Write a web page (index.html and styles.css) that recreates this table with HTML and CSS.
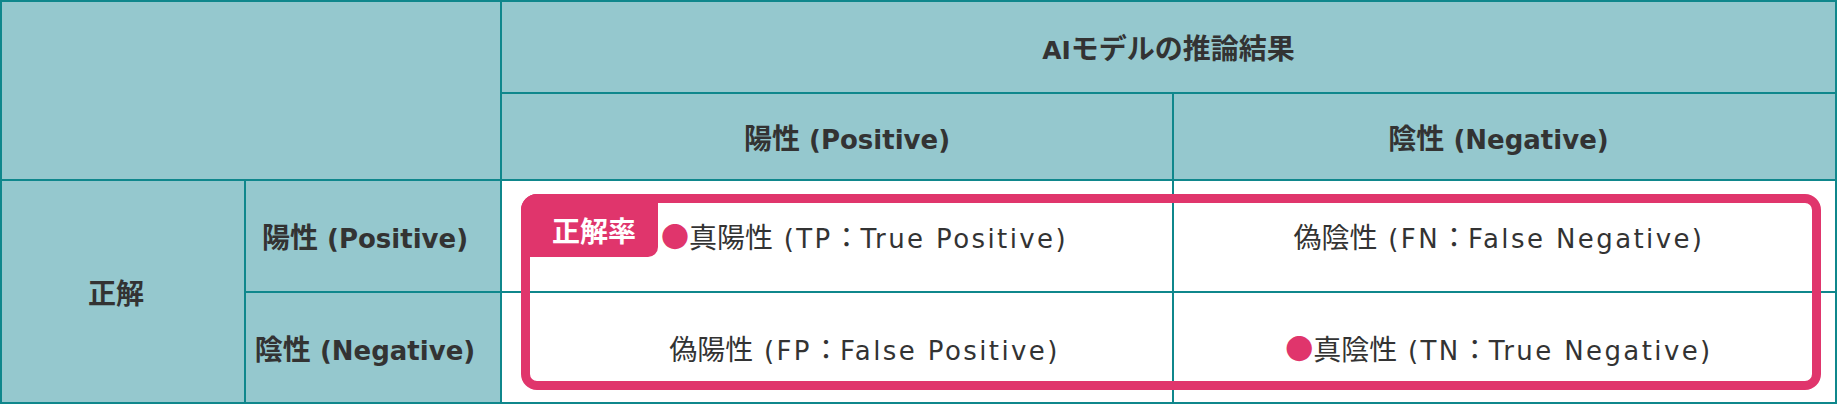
FILE: index.html
```html
<!DOCTYPE html>
<html lang="ja">
<head>
<meta charset="utf-8">
<title>混同行列</title>
<link rel="stylesheet" href="styles.css">
</head>
<body>
<div class="matrix">
  <div class="cell head corner"></div>
  <div class="cell head pred-title"><span class="label"><span class="lat">AI</span><span class="ja">モデルの推論結果</span></span></div>
  <div class="cell head top-pos"><span class="label"><span class="ja">陽性</span> (Positive)</span></div>
  <div class="cell head top-neg"><span class="label"><span class="ja">陰性</span> (Negative)</span></div>
  <div class="cell head truth-title"><span class="label"><span class="ja">正解</span></span></div>
  <div class="cell head side"><span class="label"><span class="ja">陽性</span> (Positive)</span></div>
  <div class="cell body col-pos"><span class="label"><span class="dot">●</span><span class="ja">真陽性</span> (TP<span class="ja">：</span>True Positive)</span></div>
  <div class="cell body col-neg"><span class="label"><span class="ja">偽陰性</span> (FN<span class="ja">：</span>False Negative)</span></div>
  <div class="cell head side"><span class="label"><span class="ja">陰性</span> (Negative)</span></div>
  <div class="cell body col-pos"><span class="label"><span class="ja">偽陽性</span> (FP<span class="ja">：</span>False Positive)</span></div>
  <div class="cell body col-neg"><span class="label"><span class="dot">●</span><span class="ja">真陰性</span> (TN<span class="ja">：</span>True Negative)</span></div>
  <div class="accuracy"><span class="badge">正解率</span></div>
</div>
</body>
</html>
```

FILE: styles.css
```css
html, body {
  margin: 0;
  padding: 0;
  background: #ffffff;
}

.matrix {
  position: relative;
  display: grid;
  grid-template-columns: 242px 254px 670px 661px;
  grid-template-rows: 90px 85px 110px 109px;
  gap: 2px;
  padding: 2px;
  width: max-content;
  background: #0f878c;
  font-family: "DejaVu Sans", "Noto Sans CJK JP", sans-serif;
  font-size: 26px;
  color: #333333;
}

.cell {
  display: flex;
  align-items: center;
  justify-content: center;
  white-space: nowrap;
}

.label {
  display: block;
}

.head {
  background: #95c8ce;
  font-weight: 700;
}

.body {
  background: #ffffff;
  font-weight: 400;
  letter-spacing: 2.4px;
}

.corner {
  grid-column: 1 / 3;
  grid-row: 1 / 3;
}

.pred-title {
  grid-column: 3 / 5;
  grid-row: 1;
}

.top-pos {
  padding-left: 20px;
}

.top-neg {
  padding-right: 12px;
}

.truth-title {
  grid-column: 1;
  grid-row: 3 / 5;
  padding-right: 14px;
}

.side {
  padding-right: 16px;
}

.col-pos {
  padding-left: 55px;
}

.col-neg {
  padding-right: 11px;
}

.ja {
  font-family: "Noto Sans CJK JP", sans-serif;
  font-size: 28px;
  letter-spacing: 0;
}

.lat {
  font-family: "DejaVu Sans", sans-serif;
  font-size: 25px;
}

.dot {
  font-family: "Noto Sans CJK JP", sans-serif;
  font-size: 28px;
  letter-spacing: 0;
  color: #e0356c;
}

.accuracy {
  position: absolute;
  left: 521px;
  top: 194px;
  width: 1300px;
  height: 196px;
  box-sizing: border-box;
  border: 9px solid #e0356c;
  border-radius: 16px;
  pointer-events: none;
}

.badge {
  position: absolute;
  top: -9px;
  left: -9px;
  width: 137px;
  height: 63px;
  box-sizing: border-box;
  padding: 9px 0 0 9px;
  display: flex;
  align-items: center;
  justify-content: center;
  background: #e0356c;
  color: #ffffff;
  font-family: "Noto Sans CJK JP", sans-serif;
  font-size: 28px;
  font-weight: 700;
  border-radius: 16px 0 10px 0;
}
```
